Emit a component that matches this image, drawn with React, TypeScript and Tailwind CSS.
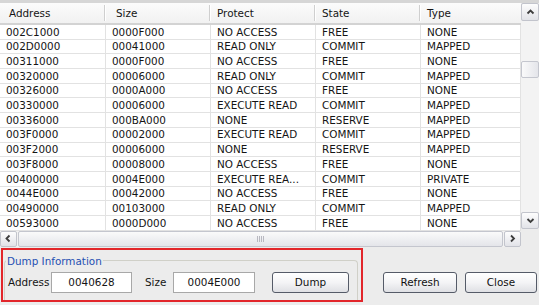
const rows = [
  ["002C1000", "0000F000", "NO ACCESS", "FREE", "NONE"],
  ["002D0000", "00041000", "READ ONLY", "COMMIT", "MAPPED"],
  ["00311000", "0000F000", "NO ACCESS", "FREE", "NONE"],
  ["00320000", "00006000", "READ ONLY", "COMMIT", "MAPPED"],
  ["00326000", "0000A000", "NO ACCESS", "FREE", "NONE"],
  ["00330000", "00006000", "EXECUTE READ", "COMMIT", "MAPPED"],
  ["00336000", "000BA000", "NONE", "RESERVE", "MAPPED"],
  ["003F0000", "00002000", "EXECUTE READ", "COMMIT", "MAPPED"],
  ["003F2000", "00006000", "NONE", "RESERVE", "MAPPED"],
  ["003F8000", "00008000", "NO ACCESS", "FREE", "NONE"],
  ["00400000", "0004E000", "EXECUTE REA...", "COMMIT", "PRIVATE"],
  ["0044E000", "00042000", "NO ACCESS", "FREE", "NONE"],
  ["00490000", "00103000", "READ ONLY", "COMMIT", "MAPPED"],
  ["00593000", "0000D000", "NO ACCESS", "FREE", "NONE"],
];

const widths = ["w-[106px]", "w-[105px]", "w-[105px]", "w-[105px]", "w-[100px]"];
const headers = [
  { label: "Address", pad: "pl-[9px]" },
  { label: "Size", pad: "pl-[10px]" },
  { label: "Protect", pad: "pl-[6px]" },
  { label: "State", pad: "pl-[6px]" },
  { label: "Type", pad: "pl-[6px]" },
];

function Arrow({ dir }: { dir: "up" | "down" | "left" | "right" }) {
  const d = {
    up: "M1.5 5.5 L4.5 2.5 L7.5 5.5",
    down: "M1.5 3 L4.5 6 L7.5 3",
    left: "M5.5 1.5 L2.5 4.5 L5.5 7.5",
    right: "M3 1.5 L6 4.5 L3 7.5",
  }[dir];
  return (
    <svg width="9" height="9" viewBox="0 0 9 9">
      <path d={d} fill="none" stroke="#3d3d3d" strokeWidth="1.8" />
    </svg>
  );
}

function ScrollBtn({ dir, className }: { dir: "up" | "down" | "left" | "right"; className: string }) {
  return (
    <div
      className={`flex items-center justify-center rounded-[2px] border border-[#c2c4cc] bg-gradient-to-b from-[#fdfdfd] to-[#e2e3e8] ${className}`}
    >
      <Arrow dir={dir} />
    </div>
  );
}

function XpButton({ label, w }: { label: string; w: string }) {
  return (
    <div
      className={`${w} flex h-[21px] items-center justify-center rounded-[3px] border border-[#555b68] bg-gradient-to-b from-[#ffffff] via-[#f4f4f6] to-[#dfe0e4] text-[#111]`}
    >
      {label}
    </div>
  );
}

export default function App() {
  return (
    <div
      className="h-[305px] w-[539px] overflow-hidden bg-[#ececec] text-[10.4px] leading-none text-[#151515]"
      style={{ fontFamily: '"DejaVu Sans", Verdana, sans-serif' }}
    >
      {/* list view */}
      <div className="flex border-t-[3px] border-[#d6d6d6]">
        <div className="flex w-[521px] flex-col bg-white">
          <div className="flex h-[22px] border-b-2 border-[#d3d3d3] bg-gradient-to-b from-[#fbfbfb] to-[#f1f1f1]">
            {headers.map((h, i) => (
              <div key={h.label} className={`${widths[i]} flex items-center justify-between`}>
                <span className={h.pad}>{h.label}</span>
                {i < 4 && (
                  <div className="flex h-[16px]">
                    <div className="w-px bg-[#cfcfcf]" />
                    <div className="w-px bg-white" />
                  </div>
                )}
              </div>
            ))}
          </div>
          {rows.map((r) => (
            <div key={r[0]} className="flex h-[14.7px] border-b border-[#e2e2e2]">
              {r.map((c, i) => (
                <div
                  key={i}
                  className={`${widths[i]} flex items-center overflow-hidden whitespace-nowrap border-r border-[#e2e2e2] pl-[6px]`}
                >
                  {c}
                </div>
              ))}
            </div>
          ))}
          {/* horizontal scrollbar */}
          <div className="flex h-[16px] bg-[#f2f2f2]">
            <ScrollBtn dir="left" className="w-[17px]" />
            <div className="mx-px flex flex-1 items-center justify-center rounded-[2px] border border-[#c4c6ce] bg-gradient-to-b from-[#fafafa] to-[#e4e5ea]">
              <div className="flex gap-[1px]">
                <div className="h-[6px] w-px bg-[#b8b8c0]" />
                <div className="h-[6px] w-px bg-[#b8b8c0]" />
                <div className="h-[6px] w-px bg-[#b8b8c0]" />
                <div className="h-[6px] w-px bg-[#b8b8c0]" />
              </div>
            </div>
            <ScrollBtn dir="right" className="w-[17px]" />
          </div>
        </div>
        {/* vertical scrollbar */}
        <div className="flex w-[18px] flex-col">
          <ScrollBtn dir="up" className="h-[18px]" />
          <div className="flex-1 bg-[#f3f3f3]">
            <div className="mt-[40px] h-[17px] rounded-[2px] border border-[#c4c6ce] bg-gradient-to-r from-[#fafafa] to-[#e4e5ea]" />
          </div>
          <ScrollBtn dir="down" className="h-[17px]" />
          <div className="h-[18px] bg-[#ececec]" />
        </div>
      </div>

      {/* bottom area */}
      <div className="flex items-start">
        <div className="ml-[1px] mt-[1px] h-[54px] w-[362px] border-2 border-[#e2262b]">
          <fieldset className="ml-[1px] mt-[5px] h-[45px] w-[354px] rounded-t-[4px] border border-b-0 border-[#d0d0c8]">
            <legend className="ml-[1px] px-[1px] leading-[12px] text-[#1f4fb2]">Dump Information</legend>
            <div className="mt-[5px] flex items-center">
              <span className="w-[46px] pl-[3px]">Address</span>
              <div className="flex h-[21px] w-[81px] items-center justify-center border border-[#a8a8a8] bg-white">
                0040628
              </div>
              <span className="w-[41px] pl-[13px]">Size</span>
              <div className="flex h-[21px] w-[82px] items-center justify-center border border-[#a8a8a8] bg-white">
                0004E000
              </div>
              <div className="ml-[17px]">
                <XpButton label="Dump" w="w-[77px]" />
              </div>
            </div>
          </fieldset>
        </div>
        <div className="ml-[20px] mt-[25px] flex gap-[8px]">
          <XpButton label="Refresh" w="w-[74px]" />
          <XpButton label="Close" w="w-[72px]" />
        </div>
      </div>
    </div>
  );
}
